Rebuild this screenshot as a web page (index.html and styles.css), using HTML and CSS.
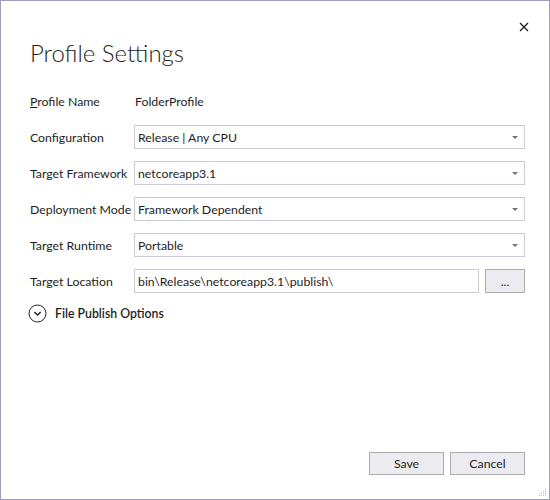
FILE: index.html
```html
<!DOCTYPE html>
<html lang="en">
<head>
    <meta charset="UTF-8">
    <title>Profile Settings</title>
    <link rel="stylesheet" href="styles.css">
</head>
<body>
    <div class="dialog">
        <div class="titlebar">
            <button class="close" title="Close">
                <svg width="10" height="10" viewBox="0 0 10 10">
                    <path d="M1 1 L9 9 M9 1 L1 9" stroke="#1e1e1e" stroke-width="1.3" fill="none"/>
                </svg>
            </button>
        </div>
        <h1>Profile Settings</h1>

        <div class="form">
            <label><u>P</u>rofile Name</label>
            <div class="value">FolderProfile</div>

            <label>Configuration</label>
            <div class="combo"><span>Release | Any CPU</span><i class="arrow"></i></div>

            <label>Target Framework</label>
            <div class="combo"><span>netcoreapp3.1</span><i class="arrow"></i></div>

            <label>Deployment Mode</label>
            <div class="combo"><span>Framework Dependent</span><i class="arrow"></i></div>

            <label>Target Runtime</label>
            <div class="combo"><span>Portable</span><i class="arrow"></i></div>

            <label>Target Location</label>
            <div class="location">
                <div class="textbox">bin\Release\netcoreapp3.1\publish\</div>
                <button class="btn browse">...</button>
            </div>
        </div>

        <div class="expander">
            <svg width="19" height="19" viewBox="0 0 19 19">
                <circle cx="9.5" cy="9.5" r="8.5" stroke="#1e1e1e" stroke-width="1" fill="none"/>
                <path d="M6.3 8.1 L9.5 11.1 L12.7 8.1" stroke="#1e1e1e" stroke-width="1.4" fill="none"/>
            </svg>
            <span>File Publish Options</span>
        </div>

        <div class="actions">
            <button class="btn">Save</button>
            <button class="btn">Cancel</button>
        </div>

        <svg class="grip" width="8" height="8" viewBox="0 0 8 8">
            <rect x="6" y="0" width="1" height="1" fill="#b8b8c8"/>
            <rect x="4" y="2" width="1" height="1" fill="#b8b8c8"/>
            <rect x="6" y="2" width="1" height="1" fill="#b8b8c8"/>
            <rect x="2" y="4" width="1" height="1" fill="#b8b8c8"/>
            <rect x="4" y="4" width="1" height="1" fill="#b8b8c8"/>
            <rect x="6" y="4" width="1" height="1" fill="#b8b8c8"/>
            <rect x="0" y="6" width="1" height="1" fill="#b8b8c8"/>
            <rect x="2" y="6" width="1" height="1" fill="#b8b8c8"/>
            <rect x="4" y="6" width="1" height="1" fill="#b8b8c8"/>
            <rect x="6" y="6" width="1" height="1" fill="#b8b8c8"/>
        </svg>
    </div>
</body>
</html>
```

FILE: styles.css
```css
body {
    margin: 0;
    font-family: "Segoe UI", Lato, sans-serif;
    font-size: 12.3px;
    color: #1e1e1e;
    background-color: #fff;
}

.dialog {
    position: relative;
    width: 550px;
    height: 500px;
    box-sizing: border-box;
    border: 1px solid #9d9dbf;
    padding: 0 24px 24px 29px;
    display: flex;
    flex-direction: column;
}

.titlebar {
    height: 36px;
    display: flex;
    justify-content: flex-end;
    align-items: flex-end;
}

.close {
    border: none;
    background: none;
    padding: 0;
    margin-right: -9px;
    width: 20px;
    height: 20px;
    display: flex;
    align-items: center;
    justify-content: center;
}

h1 {
    margin: 0;
    font-size: 24px;
    font-weight: 300;
    line-height: 32px;
    height: 52px;
}

.form {
    display: grid;
    grid-template-columns: 104px 1fr;
    grid-auto-rows: 24px;
    row-gap: 12px;
    align-items: center;
    white-space: nowrap;
}

.value {
    padding-left: 1px;
}

.combo {
    height: 24px;
    box-sizing: border-box;
    border: 1px solid #cacada;
    display: flex;
    align-items: center;
    justify-content: space-between;
    padding: 0 6px 0 3px;
}

.arrow {
    width: 0;
    height: 0;
    border-left: 3px solid transparent;
    border-right: 3px solid transparent;
    border-top: 3px solid #707070;
}

.location {
    display: flex;
    gap: 6px;
    height: 24px;
}

.textbox {
    flex: 1;
    box-sizing: border-box;
    border: 1px solid #cacada;
    padding: 0 3px;
    display: flex;
    align-items: center;
}

.btn {
    font-family: inherit;
    font-size: 12.3px;
    color: #1e1e1e;
    background-color: #ececf0;
    border: 1px solid #adadad;
    padding: 0;
}

.browse {
    width: 40px;
}

.expander {
    margin-top: 8px;
    margin-left: -2px;
    display: flex;
    align-items: center;
    gap: 8px;
    height: 24px;
    font-weight: 600;
}

.actions {
    margin-top: auto;
    display: flex;
    justify-content: flex-end;
    gap: 6px;
}

.actions .btn {
    width: 75px;
    height: 23px;
}

.grip {
    position: absolute;
    right: 2px;
    bottom: 2px;
}
```
